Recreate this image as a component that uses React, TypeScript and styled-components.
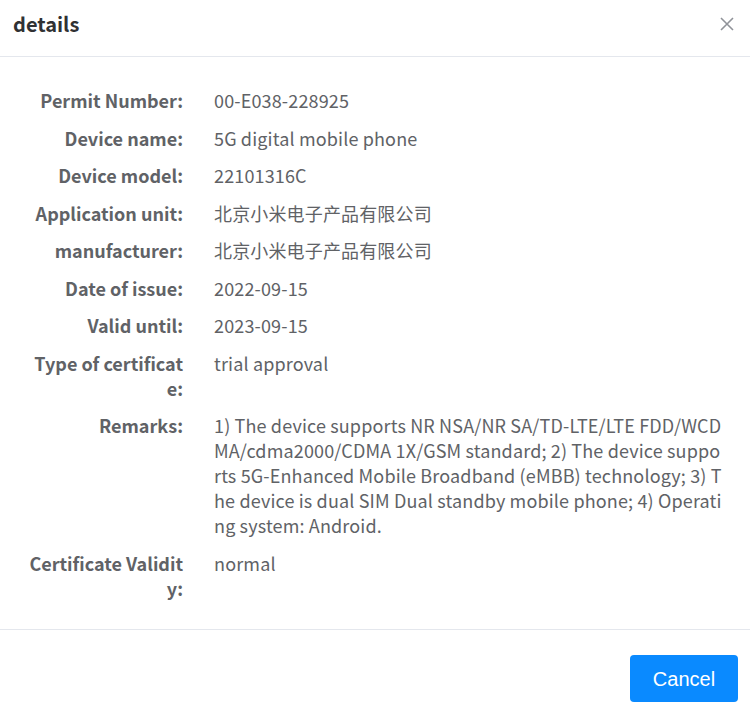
import styled, { createGlobalStyle } from "styled-components";

const GlobalStyle = createGlobalStyle`
  html, body {
    margin: 0;
    padding: 0;
    background: #ffffff;
  }
  body {
    font-family: "Noto Sans CJK SC", "Noto Sans", sans-serif;
  }
`;

const Dialog = styled.div`
  width: 750px;
  height: 713px;
  display: flex;
  flex-direction: column;
  background: #fff;
`;

const Header = styled.div`
  height: 57px;
  box-sizing: border-box;
  border-bottom: 1px solid #e4e7ed;
  display: flex;
  align-items: center;
  justify-content: space-between;
  padding: 0 14px 8px 13px;
`;

const Title = styled.h2`
  margin: 0;
  font-size: 20px;
  font-weight: 700;
  color: #303133;
  line-height: 24px;
`;

const Close = styled.button`
  border: 0;
  background: none;
  padding: 0;
  width: 18px;
  height: 18px;
  display: flex;
  align-items: center;
  justify-content: center;
  cursor: pointer;
  color: #909399;
`;

const Body = styled.div`
  flex: 1;
  padding: 31px 20px 0 27px;
  display: flex;
  flex-direction: column;
  gap: 12.5px;
`;

const Row = styled.div`
  display: grid;
  grid-template-columns: 156px 513px;
  column-gap: 31px;
  font-size: 18px;
  line-height: 25px;
  color: #606266;
`;

const Label = styled.div`
  font-weight: 700;
  text-align: right;
  word-break: break-all;
`;

const Value = styled.div`
  word-break: break-all;
  letter-spacing: 0.15px;
`;

const Footer = styled.div`
  height: 84px;
  box-sizing: border-box;
  border-top: 1px solid #e4e7ed;
  display: flex;
  justify-content: flex-end;
  align-items: flex-start;
  padding: 25px 12px 0 0;
`;

const Button = styled.button`
  width: 108px;
  height: 47px;
  border: 0;
  border-radius: 4px;
  background: #0a8aff;
  color: #fff;
  font-family: "Liberation Sans", Arial, sans-serif;
  font-size: 20px;
  padding-top: 2px;
  cursor: pointer;
`;

const fields: [string, string][] = [
  ["Permit Number:", "00-E038-228925"],
  ["Device name:", "5G digital mobile phone"],
  ["Device model:", "22101316C"],
  ["Application unit:", "北京小米电子产品有限公司"],
  ["manufacturer:", "北京小米电子产品有限公司"],
  ["Date of issue:", "2022-09-15"],
  ["Valid until:", "2023-09-15"],
  ["Type of certificate:", "trial approval"],
  [
    "Remarks:",
    "1) The device supports NR NSA/NR SA/TD-LTE/LTE FDD/WCDMA/cdma2000/CDMA 1X/GSM standard; 2) The device supports 5G-Enhanced Mobile Broadband (eMBB) technology; 3) The device is dual SIM Dual standby mobile phone; 4) Operating system: Android.",
  ],
  ["Certificate Validity:", "normal"],
];

export default function App() {
  return (
    <>
      <GlobalStyle />
      <Dialog>
        <Header>
          <Title>details</Title>
          <Close aria-label="close">
            <svg width="16" height="16" viewBox="0 0 16 16">
              <path d="M2 2 L14 14 M14 2 L2 14" stroke="currentColor" strokeWidth="1.6" />
            </svg>
          </Close>
        </Header>
        <Body>
          {fields.map(([label, value]) => (
            <Row key={label}>
              <Label>{label}</Label>
              <Value>{value}</Value>
            </Row>
          ))}
        </Body>
        <Footer>
          <Button>Cancel</Button>
        </Footer>
      </Dialog>
    </>
  );
}
